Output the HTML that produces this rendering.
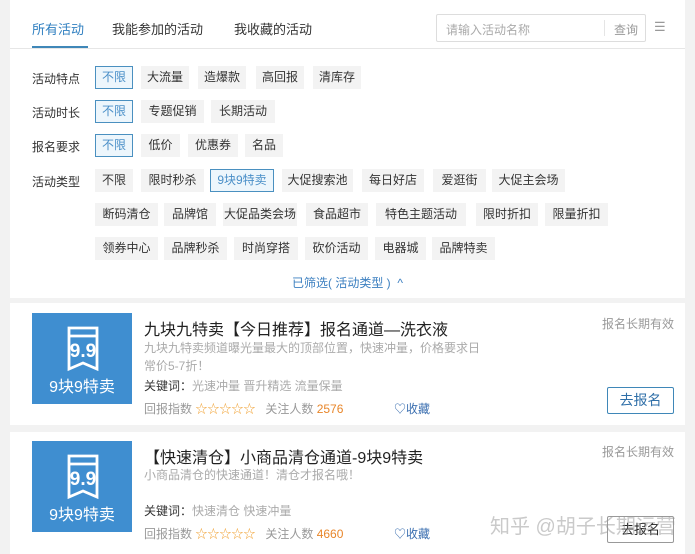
<!DOCTYPE html>
<html><head><meta charset="utf-8"><style>
*{margin:0;padding:0;box-sizing:border-box}
body{width:695px;height:554px;background:#f2f2f2;font-family:"Liberation Sans","Noto Sans CJK SC",sans-serif;font-size:12px;color:#333;position:relative;overflow:hidden}
.a{position:absolute;white-space:nowrap}
.panel{position:absolute;left:10px;top:0;width:675px;background:#fff}
.t{position:absolute;height:23px;line-height:23px;text-align:center;background:#f3f3f3;color:#333;font-size:12px}
.s{background:#edf6fc;border:1px solid #4a90c0;color:#4a8fc8;line-height:21px}
.lbl{position:absolute;left:32px;font-size:12px;color:#333}
.card{position:absolute;left:10px;width:675px;background:#fff}
.blue{position:absolute;left:22px;width:100px;height:91px;background:#3f8ed0}
.blue span{position:absolute;left:0;width:100px;top:60px;text-align:center;color:#fff;font-size:16px}
</style></head><body>
<div class="panel" style="height:298px"></div>
<div class="a" style="left:32px;top:19px;font-size:13px;color:#2f7fc0">所有活动</div>
<div class="a" style="left:32px;top:46px;width:56px;height:2px;background:#3f87b8"></div>
<div class="a" style="left:112px;top:19px;font-size:13px;color:#333">我能参加的活动</div>
<div class="a" style="left:234px;top:19px;font-size:13px;color:#333">我收藏的活动</div>
<div class="a" style="left:10px;top:48px;width:675px;height:1px;background:#e6e6e6"></div>
<div class="a" style="left:436px;top:14px;width:210px;height:28px;border:1px solid #ddd;border-radius:2px"></div>
<div class="a" style="left:446px;top:21px;color:#aaa">请输入活动名称</div>
<div class="a" style="left:604px;top:20px;width:1px;height:16px;background:#e5e5e5"></div>
<div class="a" style="left:614px;top:21px;color:#999">查询</div>
<div class="a" style="left:654px;top:19px;color:#999;font-size:13px">☰</div>

<div class="lbl" style="top:70px">活动特点</div>
<div class="t s" style="left:95px;top:66px;width:38px">不限</div>
<div class="t" style="left:141px;top:66px;width:48px">大流量</div>
<div class="t" style="left:198px;top:66px;width:48px">造爆款</div>
<div class="t" style="left:256px;top:66px;width:48px">高回报</div>
<div class="t" style="left:313px;top:66px;width:48px">清库存</div>

<div class="lbl" style="top:104px">活动时长</div>
<div class="t s" style="left:95px;top:100px;width:38px">不限</div>
<div class="t" style="left:141px;top:100px;width:63px">专题促销</div>
<div class="t" style="left:211px;top:100px;width:64px">长期活动</div>

<div class="lbl" style="top:138px">报名要求</div>
<div class="t s" style="left:95px;top:134px;width:38px">不限</div>
<div class="t" style="left:141px;top:134px;width:39px">低价</div>
<div class="t" style="left:188px;top:134px;width:50px">优惠券</div>
<div class="t" style="left:245px;top:134px;width:38px">名品</div>

<div class="lbl" style="top:173px">活动类型</div>
<div class="t" style="left:95px;top:169px;width:38px">不限</div>
<div class="t" style="left:141px;top:169px;width:63px">限时秒杀</div>
<div class="t s" style="left:210px;top:169px;width:64px">9块9特卖</div>
<div class="t" style="left:282px;top:169px;width:71px">大促搜索池</div>
<div class="t" style="left:362px;top:169px;width:62px">每日好店</div>
<div class="t" style="left:433px;top:169px;width:53px">爱逛街</div>
<div class="t" style="left:492px;top:169px;width:73px">大促主会场</div>

<div class="t" style="left:95px;top:203px;width:63px">断码清仓</div>
<div class="t" style="left:164px;top:203px;width:52px">品牌馆</div>
<div class="t" style="left:223px;top:203px;width:74px">大促品类会场</div>
<div class="t" style="left:306px;top:203px;width:62px">食品超市</div>
<div class="t" style="left:376px;top:203px;width:90px">特色主题活动</div>
<div class="t" style="left:476px;top:203px;width:62px">限时折扣</div>
<div class="t" style="left:545px;top:203px;width:63px">限量折扣</div>

<div class="t" style="left:95px;top:237px;width:63px">领券中心</div>
<div class="t" style="left:164px;top:237px;width:63px">品牌秒杀</div>
<div class="t" style="left:234px;top:237px;width:64px">时尚穿搭</div>
<div class="t" style="left:305px;top:237px;width:63px">砍价活动</div>
<div class="t" style="left:375px;top:237px;width:51px">电器城</div>
<div class="t" style="left:432px;top:237px;width:63px">品牌特卖</div>

<div class="a" style="left:292px;top:274px;color:#3b7fc0">已筛选( 活动类型 )&nbsp; ^</div>

<!-- card 1 -->
<div class="card" style="top:303px;height:122px">
 <div class="blue" style="top:10px">
  <svg class="a" style="left:34px;top:12px" width="34" height="48" viewBox="0 0 34 48" fill="none" stroke="#fff" stroke-width="2.8"><path d="M3 3H31V44L17 38L3 44Z M3 11H31"/><text x="17" y="32" fill="#fff" stroke="none" font-size="19" font-weight="bold" text-anchor="middle" font-family="Liberation Sans">9.9</text></svg>
  <span>9块9特卖</span>
 </div>
 <div class="a" style="left:134px;top:13px;font-size:16px;color:#222">九块九特卖【今日推荐】报名通道—洗衣液</div>
 <div class="a" style="left:134px;top:36px;color:#aaa">九块九特卖频道曝光量最大的顶部位置，快速冲量，价格要求日</div>
 <div class="a" style="left:134px;top:54px;color:#aaa">常价5-7折！</div>
 <div class="a" style="left:134px;top:74px;color:#333">关键词：<span style="color:#aaa">光速冲量 晋升精选 流量保量</span></div>
 <div class="a" style="left:134px;top:97px;color:#999">回报指数 <span style="color:#f0a030">☆☆☆☆☆</span>&nbsp;&nbsp;&nbsp;关注人数 <span style="color:#e8862a">2576</span></div>
 <div class="a" style="left:384px;top:97px;color:#3b6fb0">♡收藏</div>
 <div class="a" style="left:592px;top:12px;color:#999">报名长期有效</div>
 <div class="a" style="left:597px;top:84px;width:67px;height:27px;border:1px solid #3f87b8;border-radius:2px;text-align:center;line-height:25px;font-size:14px;color:#2f6fa8">去报名</div>
</div>
<!-- card 2 -->
<div class="card" style="top:432px;height:122px">
 <div class="blue" style="top:9px">
  <svg class="a" style="left:34px;top:12px" width="34" height="48" viewBox="0 0 34 48" fill="none" stroke="#fff" stroke-width="2.8"><path d="M3 3H31V44L17 38L3 44Z M3 11H31"/><text x="17" y="32" fill="#fff" stroke="none" font-size="19" font-weight="bold" text-anchor="middle" font-family="Liberation Sans">9.9</text></svg>
  <span>9块9特卖</span>
 </div>
 <div class="a" style="left:134px;top:12px;font-size:16px;color:#222">【快速清仓】小商品清仓通道-9块9特卖</div>
 <div class="a" style="left:134px;top:34px;color:#aaa">小商品清仓的快速通道！清仓才报名哦！</div>
 <div class="a" style="left:134px;top:70px;color:#333">关键词：<span style="color:#aaa">快速清仓 快速冲量</span></div>
 <div class="a" style="left:134px;top:93px;color:#999">回报指数 <span style="color:#f0a030">☆☆☆☆☆</span>&nbsp;&nbsp;&nbsp;关注人数 <span style="color:#e8862a">4660</span></div>
 <div class="a" style="left:384px;top:93px;color:#3b6fb0">♡收藏</div>
 <div class="a" style="left:592px;top:11px;color:#999">报名长期有效</div>
 <div class="a" style="left:597px;top:84px;width:67px;height:27px;border:1px solid #999;border-radius:2px;text-align:center;line-height:25px;font-size:13px;color:#222">去报名</div>
 <div class="a" style="left:480px;top:78px;font-size:20px;color:rgba(150,150,150,.5)">知乎 @胡子长期运营</div>
</div>
</body></html>
